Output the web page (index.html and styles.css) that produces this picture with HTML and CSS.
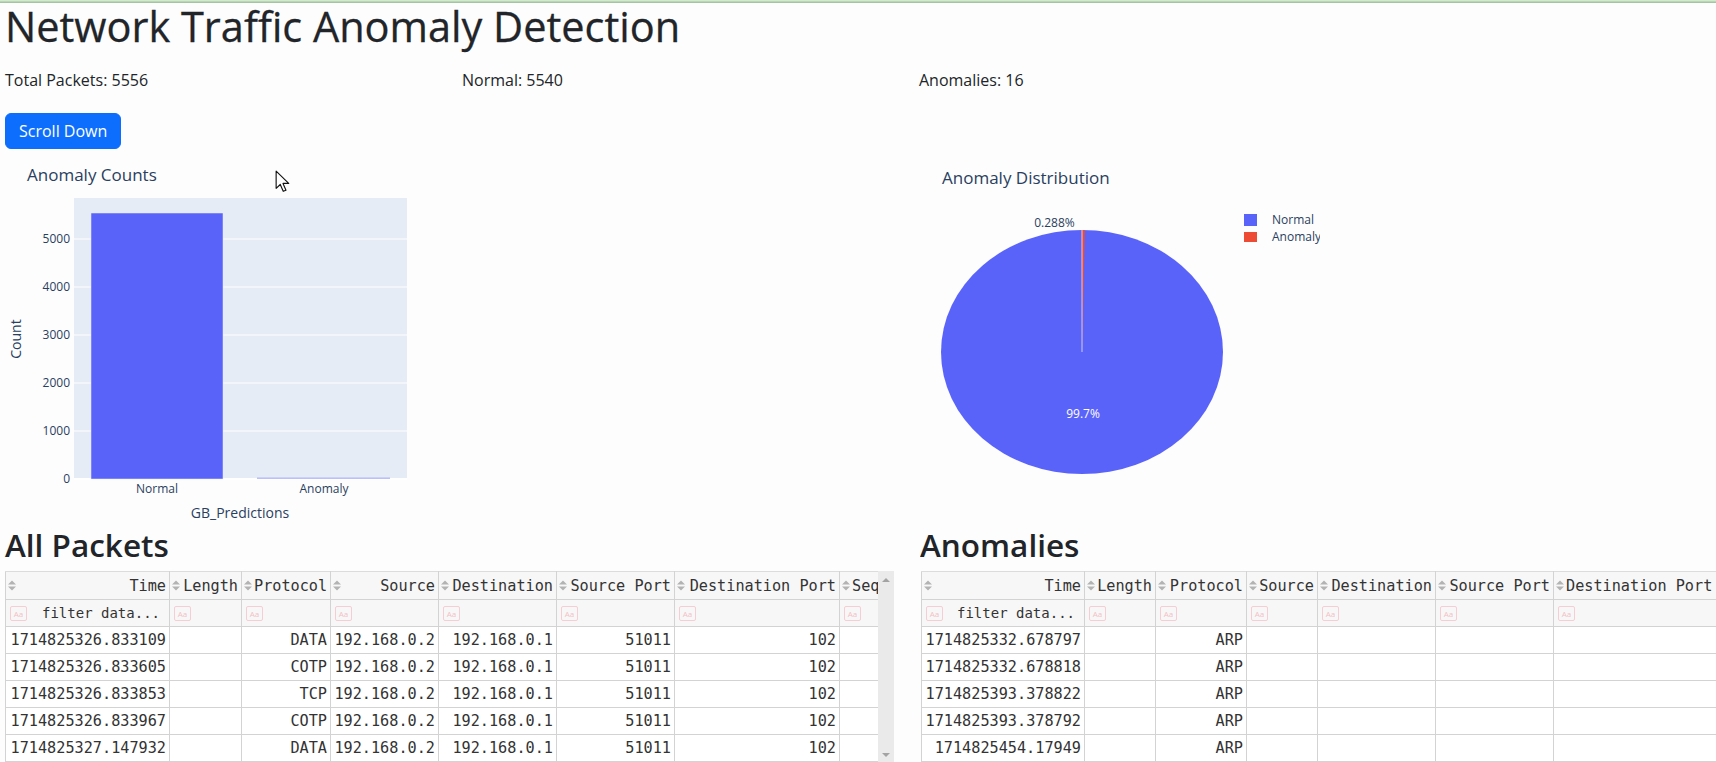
FILE: index.html
```html
<!DOCTYPE html>
<html lang="en">
<head>
<meta charset="utf-8">
<title>Network Traffic Anomaly Detection</title>
<link rel="stylesheet" href="styles.css">
</head>
<body>
<div class="topline"></div>
<main class="page">
  <h1 class="title">Network Traffic Anomaly Detection</h1>
  <div class="stats">
    <div>Total Packets: 5556</div>
    <div>Normal: 5540</div>
    <div>Anomalies: 16</div>
  </div>
  <button class="btn" type="button">Scroll Down</button>

  <div class="charts">
    <svg class="bar-chart" width="460" height="372" viewBox="0 0 460 372">
      <text class="ch-title" x="27" y="31">Anomaly Counts</text>
      <rect x="74" y="48" width="333" height="281" fill="#e5ecf6"/>
      <g stroke="#ffffff" stroke-width="1">
        <line x1="74" x2="407" y1="89" y2="89"/>
        <line x1="74" x2="407" y1="137" y2="137"/>
        <line x1="74" x2="407" y1="185" y2="185"/>
        <line x1="74" x2="407" y1="233" y2="233"/>
        <line x1="74" x2="407" y1="281" y2="281"/>
      </g>
      <line x1="74" x2="407" y1="329" y2="329" stroke="#ffffff" stroke-width="2"/>
      <rect x="91" y="63" width="132" height="266" fill="#5a63f9" stroke="#e5ecf6" stroke-width="0.5"/>
      <rect x="257" y="327.5" width="133" height="1.5" fill="#8f96f7" opacity="0.6"/>
      <g class="tick" text-anchor="end">
        <text x="70" y="93">5000</text>
        <text x="70" y="141">4000</text>
        <text x="70" y="189">3000</text>
        <text x="70" y="237">2000</text>
        <text x="70" y="285">1000</text>
        <text x="70" y="333">0</text>
      </g>
      <g class="tick" text-anchor="middle">
        <text x="157" y="343">Normal</text>
        <text x="324" y="343">Anomaly</text>
      </g>
      <text class="ax-title" x="240" y="368" text-anchor="middle">GB_Predictions</text>
      <text class="ax-title" transform="translate(21,189) rotate(-90)" text-anchor="middle">Count</text>
    </svg>

    <svg class="pie-chart" width="420" height="340" viewBox="0 0 420 340">
      <text class="ch-title" x="42" y="34">Anomaly Distribution</text>
      <g transform="translate(182,202) scale(141,122)">
        <circle r="1" fill="#5a63f9"/>
        <path d="M0 0 L-0.004 -1 A1 1 0 0 1 0.02 -0.9998 Z" fill="#ee4b35"/>
        <line x1="0" y1="0" x2="0" y2="-1" stroke="#c9ccf7" stroke-width="1" vector-effect="non-scaling-stroke"/>
      </g>
      <text class="tick" x="154.5" y="77" text-anchor="middle">0.288%</text>
      <text class="tick white" x="183" y="268" text-anchor="middle">99.7%</text>
      <rect x="344" y="64" width="13" height="12" fill="#5a63f9"/>
      <rect x="344" y="82" width="13" height="10" fill="#ee4b35"/>
      <text class="tick" x="372" y="74">Normal</text>
      <text class="tick" x="372" y="91">Anomaly</text>
    </svg>
  </div>

  <div class="tables">
    <section class="tsec">
      <h2>All Packets</h2>
      <div class="twrap">
        <div class="tclip">
          <table class="grid left-grid">
            <colgroup>
              <col style="width:164px"><col style="width:72px"><col style="width:89px"><col style="width:108px">
              <col style="width:118px"><col style="width:118px"><col style="width:165px"><col style="width:120px">
            </colgroup>
            <thead>
              <tr class="head">
                <th><div class="th"><svg class="sort" viewBox="0 0 8 10"><path d="M4 0L8 4H0Z M0 6H8L4 10Z"/></svg><span>Time</span></div></th>
                <th><div class="th"><svg class="sort" viewBox="0 0 8 10"><path d="M4 0L8 4H0Z M0 6H8L4 10Z"/></svg><span>Length</span></div></th>
                <th><div class="th"><svg class="sort" viewBox="0 0 8 10"><path d="M4 0L8 4H0Z M0 6H8L4 10Z"/></svg><span>Protocol</span></div></th>
                <th><div class="th"><svg class="sort" viewBox="0 0 8 10"><path d="M4 0L8 4H0Z M0 6H8L4 10Z"/></svg><span>Source</span></div></th>
                <th><div class="th"><svg class="sort" viewBox="0 0 8 10"><path d="M4 0L8 4H0Z M0 6H8L4 10Z"/></svg><span>Destination</span></div></th>
                <th><div class="th"><svg class="sort" viewBox="0 0 8 10"><path d="M4 0L8 4H0Z M0 6H8L4 10Z"/></svg><span>Source Port</span></div></th>
                <th><div class="th"><svg class="sort" viewBox="0 0 8 10"><path d="M4 0L8 4H0Z M0 6H8L4 10Z"/></svg><span>Destination Port</span></div></th>
                <th><div class="th th-start"><svg class="sort" viewBox="0 0 8 10"><path d="M4 0L8 4H0Z M0 6H8L4 10Z"/></svg><span>Seq</span></div></th>
              </tr>
              <tr class="filter">
                <td><div class="flt"><span class="aa">Aa</span><span class="ph">filter data...</span></div></td>
                <td><div class="flt"><span class="aa">Aa</span></div></td>
                <td><div class="flt"><span class="aa">Aa</span></div></td>
                <td><div class="flt"><span class="aa">Aa</span></div></td>
                <td><div class="flt"><span class="aa">Aa</span></div></td>
                <td><div class="flt"><span class="aa">Aa</span></div></td>
                <td><div class="flt"><span class="aa">Aa</span></div></td>
                <td><div class="flt"><span class="aa">Aa</span></div></td>
              </tr>
            </thead>
            <tbody>
              <tr><td>1714825326.833109</td><td></td><td>DATA</td><td>192.168.0.2</td><td>192.168.0.1</td><td>51011</td><td>102</td><td></td></tr>
              <tr><td>1714825326.833605</td><td></td><td>COTP</td><td>192.168.0.2</td><td>192.168.0.1</td><td>51011</td><td>102</td><td></td></tr>
              <tr><td>1714825326.833853</td><td></td><td>TCP</td><td>192.168.0.2</td><td>192.168.0.1</td><td>51011</td><td>102</td><td></td></tr>
              <tr><td>1714825326.833967</td><td></td><td>COTP</td><td>192.168.0.2</td><td>192.168.0.1</td><td>51011</td><td>102</td><td></td></tr>
              <tr><td>1714825327.147932</td><td></td><td>DATA</td><td>192.168.0.2</td><td>192.168.0.1</td><td>51011</td><td>102</td><td></td></tr>
            </tbody>
          </table>
        </div>
        <div class="vscroll"><span class="arr up"></span><span class="arr down"></span></div>
      </div>
    </section>

    <section class="tsec tsec-right">
      <h2>Anomalies</h2>
      <div class="tclip-wide">
        <table class="grid right-grid">
          <colgroup>
            <col style="width:163px"><col style="width:71px"><col style="width:91px"><col style="width:71px">
            <col style="width:118px"><col style="width:118px"><col style="width:170px">
          </colgroup>
          <thead>
            <tr class="head">
              <th><div class="th"><svg class="sort" viewBox="0 0 8 10"><path d="M4 0L8 4H0Z M0 6H8L4 10Z"/></svg><span>Time</span></div></th>
              <th><div class="th"><svg class="sort" viewBox="0 0 8 10"><path d="M4 0L8 4H0Z M0 6H8L4 10Z"/></svg><span>Length</span></div></th>
              <th><div class="th"><svg class="sort" viewBox="0 0 8 10"><path d="M4 0L8 4H0Z M0 6H8L4 10Z"/></svg><span>Protocol</span></div></th>
              <th><div class="th"><svg class="sort" viewBox="0 0 8 10"><path d="M4 0L8 4H0Z M0 6H8L4 10Z"/></svg><span>Source</span></div></th>
              <th><div class="th"><svg class="sort" viewBox="0 0 8 10"><path d="M4 0L8 4H0Z M0 6H8L4 10Z"/></svg><span>Destination</span></div></th>
              <th><div class="th"><svg class="sort" viewBox="0 0 8 10"><path d="M4 0L8 4H0Z M0 6H8L4 10Z"/></svg><span>Source Port</span></div></th>
              <th><div class="th th-start"><svg class="sort" viewBox="0 0 8 10"><path d="M4 0L8 4H0Z M0 6H8L4 10Z"/></svg><span>Destination Port</span></div></th>
            </tr>
            <tr class="filter">
              <td><div class="flt"><span class="aa">Aa</span><span class="ph">filter data...</span></div></td>
              <td><div class="flt"><span class="aa">Aa</span></div></td>
              <td><div class="flt"><span class="aa">Aa</span></div></td>
              <td><div class="flt"><span class="aa">Aa</span></div></td>
              <td><div class="flt"><span class="aa">Aa</span></div></td>
              <td><div class="flt"><span class="aa">Aa</span></div></td>
              <td><div class="flt"><span class="aa">Aa</span></div></td>
            </tr>
          </thead>
          <tbody>
            <tr><td>1714825332.678797</td><td></td><td>ARP</td><td></td><td></td><td></td><td></td></tr>
            <tr><td>1714825332.678818</td><td></td><td>ARP</td><td></td><td></td><td></td><td></td></tr>
            <tr><td>1714825393.378822</td><td></td><td>ARP</td><td></td><td></td><td></td><td></td></tr>
            <tr><td>1714825393.378792</td><td></td><td>ARP</td><td></td><td></td><td></td><td></td></tr>
            <tr><td>1714825454.17949</td><td></td><td>ARP</td><td></td><td></td><td></td><td></td></tr>
          </tbody>
        </table>
      </div>
    </section>
  </div>
</main>

<svg class="cursor" width="16" height="23" viewBox="0 0 14 20">
  <path d="M1 1 V16 L4.6 12.6 L7.2 18.6 L9.6 17.6 L7 11.7 H12 Z" fill="#ffffff" stroke="#111111" stroke-width="1" stroke-linejoin="round"/>
</svg>
</body>
</html>
```

FILE: styles.css
```css
* { box-sizing: border-box; }

html, body {
  margin: 0;
  overflow: hidden;
}

body {
  width: 1716px;
  height: 762px;
  position: relative;
  background: #fdfdfd;
  color: #212529;
  font-family: "Open Sans", "Noto Sans", sans-serif;
}

.topline {
  height: 3px;
  background: linear-gradient(#d3e9cf 0 1px, #bad7b5 1px 2px, #a5c4a1 2px 3px);
}

.page {
  padding-left: 5px;
}

.title {
  font-size: 41.5px;
  font-weight: 500;
  line-height: 46px;
  margin: 0 0 19px;
  -webkit-text-stroke: 0.3px #212529;
}

.stats {
  display: grid;
  grid-template-columns: repeat(3, 457px);
  font-size: 16px;
  line-height: 24px;
}

.btn {
  display: block;
  margin-top: 21px;
  background: #0d6efd;
  color: #ffffff;
  border: 1px solid #0d6efd;
  border-radius: 6px;
  padding: 5px 13px;
  font: 16px/24px "Open Sans", "Noto Sans", sans-serif;
}

.charts {
  display: flex;
  gap: 440px;
  margin: 1px 0 0 -5px;
}

.charts svg {
  display: block;
  font-family: "Open Sans", "Noto Sans", sans-serif;
}

.ch-title {
  font-size: 17px;
  fill: #2a3f5f;
}

.tick {
  font-size: 12px;
  fill: #2a3f5f;
}

.tick.white {
  fill: #ffffff;
}

.ax-title {
  font-size: 14px;
  fill: #2a3f5f;
}

.tables {
  display: grid;
  grid-template-columns: 915px 1fr;
}

.tsec h2 {
  font-size: 31.5px;
  font-weight: 600;
  line-height: 38px;
  margin: 4px 0 7px;
}

.tsec-right {
  overflow: hidden;
}

.twrap {
  display: flex;
  width: 889px;
}

.tclip {
  width: 873px;
  overflow: hidden;
}

.tclip-wide {
  margin-left: 1px;
  overflow: hidden;
}

.vscroll {
  width: 16px;
  background: #eaeaea;
  display: flex;
  flex-direction: column;
  justify-content: space-between;
  align-items: center;
  padding: 7px 0 5px;
}

.arr {
  width: 0;
  height: 0;
  border-left: 4px solid transparent;
  border-right: 4px solid transparent;
}

.arr.up { border-bottom: 4px solid #a3a3a3; }
.arr.down { border-top: 4px solid #a3a3a3; }

.grid {
  border-collapse: collapse;
  table-layout: fixed;
  font-family: "DejaVu Sans Mono", "Liberation Mono", monospace;
  font-size: 15.2px;
  color: #333333;
}

.left-grid { width: 954px; }
.right-grid { width: 802px; }

.grid th,
.grid td {
  border: 1px solid #d3d3d3;
  padding: 0 3px;
  text-align: right;
  white-space: nowrap;
  overflow: hidden;
  font-weight: 400;
}

.grid tr.head th {
  height: 28px;
  padding-left: 2px;
  background: #f7f7f7;
  border-top-color: #dcdcdc;
}

.grid tr.filter td {
  height: 27px;
  background: #f7f7f7;
}

.grid tbody td {
  height: 27px;
  background: #ffffff;
}

.th {
  display: flex;
  align-items: center;
  justify-content: space-between;
  gap: 2px;
}

.th-start {
  justify-content: flex-start;
}

.sort {
  width: 8px;
  height: 11px;
  flex: none;
  fill: #b3b3b3;
}

.flt {
  display: flex;
  align-items: center;
  justify-content: space-between;
  padding-left: 1px;
}

.aa {
  width: 17px;
  height: 15px;
  border: 1px solid #f6cdd2;
  border-radius: 2px;
  color: #f3bfc5;
  font: 8px/13px "Open Sans", sans-serif;
  text-align: center;
}

.ph {
  font-size: 14px;
  padding-right: 6px;
  color: #333333;
}

.cursor {
  position: absolute;
  left: 275px;
  top: 170px;
}
```
